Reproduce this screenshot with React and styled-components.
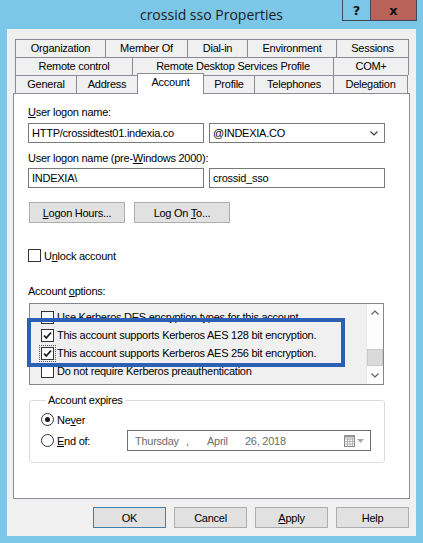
import React from 'react';
import styled, { createGlobalStyle } from 'styled-components';

const GlobalStyle = createGlobalStyle`
  html, body {
    margin: 0;
    padding: 0;
  }
  body {
    background: #7cc7e8;
    font-family: "Liberation Sans", Arial, sans-serif;
    font-size: 11px;
    letter-spacing: -0.25px;
    color: #000;
  }
  * {
    box-sizing: border-box;
  }
`;

const Window = styled.div`
  width: 423px;
  height: 543px;
  background: #7cc7e8;
  display: flex;
  flex-direction: column;
`;

const TitleBar = styled.div`
  height: 29px;
  flex: none;
  display: grid;
  grid-template-columns: 1fr auto 1fr;
`;

const Title = styled.div`
  grid-column: 2;
  align-self: center;
  font-family: "Open Sans", sans-serif;
  font-size: 14px;
  letter-spacing: 0;
  color: #1b1b1b;
  padding-bottom: 1px;
`;

const Controls = styled.div`
  grid-column: 3;
  justify-self: end;
  align-self: start;
  display: flex;
  margin-right: 6px;
`;

const CaptionButton = styled.div`
  width: ${p => p.$w}px;
  height: 21px;
  border: 1px solid #3b4a54;
  border-top: none;
  border-left: ${p => (p.$first ? '1px solid #3b4a54' : 'none')};
  background: ${p => p.$bg};
  display: flex;
  align-items: center;
  justify-content: center;
  font-family: "DejaVu Sans", sans-serif;
  font-weight: bold;
  font-size: 13px;
  letter-spacing: 0;
  color: #111;
`;

const Client = styled.div`
  flex: 1;
  margin: 0 7px 7px;
  background: #f0f0f0;
  padding: 10px 6px 0;
  display: flex;
  flex-direction: column;
`;

const TabStrip = styled.div`
  margin: 0 2px;
  display: flex;
  flex-direction: column;
`;

const TabRow = styled.div`
  display: flex;
  height: 18px;
`;

const Tab = styled.div`
  flex: none;
  width: ${p => p.$w}px;
  height: ${p => (p.$active ? 21 : 18)}px;
  margin-top: ${p => (p.$active ? -2 : 0)}px;
  margin-right: ${p => (p.$active ? -1 : 0)}px;
  border-top: 1px solid #898c95;
  border-left: 1px solid #898c95;
  border-right: ${p => (p.$active || p.$last ? '1px solid #898c95' : 'none')};
  background: ${p => (p.$active ? '#fff' : '#f0f0f0')};
  position: ${p => (p.$active ? 'relative' : 'static')};
  z-index: ${p => (p.$active ? 1 : 'auto')};
  text-align: center;
  line-height: 17px;
  white-space: nowrap;
`;

const Panel = styled.div`
  flex: none;
  height: 406px;
  border: 1px solid #898c95;
  background: #fff;
  padding: 12px 14px 0;
  display: flex;
  flex-direction: column;
`;

const Label = styled.div`
  line-height: 13px;
  margin-top: ${p => p.$mt || 0}px;
`;

const Key = styled.span`
  text-decoration: underline;
  text-underline-offset: 1px;
`;

const FieldRow = styled.div`
  display: flex;
  gap: 5px;
  margin-top: ${p => p.$mt}px;
`;

const TextBox = styled.div`
  width: 176px;
  height: 20px;
  border: 1px solid #7a7a7a;
  background: #fff;
  padding: 0 6px 0 3px;
  line-height: 18px;
  display: flex;
  align-items: center;
  justify-content: space-between;
`;

const ButtonRow = styled.div`
  display: flex;
  gap: ${p => p.$gap}px;
  margin-top: ${p => p.$mt}px;
  margin-left: ${p => p.$ml || 0}px;
  justify-content: ${p => (p.$end ? 'flex-end' : 'flex-start')};
  margin-right: ${p => (p.$end ? 1 : 0)}px;
`;

const Button = styled.div`
  width: ${p => p.$w}px;
  height: 21px;
  border: 1px solid ${p => (p.$default ? '#3c7fb1' : '#adadad')};
  background: #e1e1e1;
  display: flex;
  align-items: center;
  justify-content: center;
  white-space: pre;
`;

const CheckRow = styled.div`
  display: flex;
  align-items: center;
  gap: 3px;
  height: 13px;
  margin-top: 26px;
`;

const Box = styled.div`
  width: 13px;
  height: 13px;
  flex: none;
  border: 1px solid #333;
  background: #fff;
  display: flex;
  align-items: center;
  justify-content: center;
  outline: ${p => (p.$focus ? '1px dotted #555' : 'none')};
  outline-offset: 1px;
`;

const ListWrap = styled.div`
  position: relative;
  width: 355px;
  height: 82px;
  margin: 5px 0 0 1px;
  border: 1px solid #828790;
  background: #f0f0f0;
  display: flex;
`;

const Items = styled.div`
  flex: 1;
  min-width: 0;
  padding-top: 4px;
  overflow: hidden;
`;

const Item = styled.div`
  height: 18px;
  display: flex;
  align-items: center;
  gap: 3px;
  padding-left: 11px;
  white-space: nowrap;
`;

const ScrollBar = styled.div`
  width: 17px;
  flex: none;
  border-left: 1px solid #e6e6e6;
  background: #fdfdfd;
  display: flex;
  flex-direction: column;
`;

const ScrollArrow = styled.div`
  height: 17px;
  display: flex;
  align-items: center;
  justify-content: center;
`;

const Track = styled.div`
  flex: 1;
  display: flex;
  flex-direction: column;
  justify-content: flex-end;
`;

const Thumb = styled.div`
  height: 17px;
  margin: 0 0 1px;
  background: #dadada;
  border: 1px solid #c8c8c8;
`;

const Highlight = styled.div`
  position: absolute;
  left: -3px;
  top: 14px;
  width: 318px;
  height: 49px;
  border: 4px solid #2d5fb5;
  pointer-events: none;
`;

const Group = styled.fieldset`
  width: 356px;
  margin: 9px 0 0 1px;
  padding: 6px 10px 11px 11px;
  border: 1px solid #dcdcdc;
  border-radius: 3px;
`;

const Legend = styled.legend`
  padding: 0 2px;
  margin-left: 5px;
  line-height: 13px;
`;

const RadioRow = styled.div`
  display: flex;
  align-items: center;
  height: ${p => p.$h}px;
  margin-top: ${p => p.$mt || 0}px;
`;

const Radio = styled.div`
  width: 13px;
  height: 13px;
  flex: none;
  border-radius: 50%;
  border: 1px solid #333;
  background: #fff;
  display: flex;
  align-items: center;
  justify-content: center;
  margin-right: 3px;
  &::after {
    content: '';
    display: ${p => (p.$on ? 'block' : 'none')};
    width: 5px;
    height: 5px;
    border-radius: 50%;
    background: #1a1a1a;
  }
`;

const RadioLabel = styled.span`
  width: ${p => p.$w || 'auto'};
  flex: none;
`;

const DatePicker = styled.div`
  width: 244px;
  height: 21px;
  border: 1px solid #6f6f6f;
  display: flex;
  align-items: center;
  padding: 0 6px 0 7px;
  color: #6d6d6d;
`;

const DatePart = styled.span`
  width: ${p => p.$w}px;
  flex: none;
`;

const DateIcon = styled.div`
  margin-left: auto;
  display: flex;
  align-items: center;
  gap: 2px;
`;

const Chevron = ({ up, color = '#606060' }) => (
  <svg width="8" height="5" viewBox="0 0 8 5">
    <polyline
      points={up ? '0.5,4.5 4,1 7.5,4.5' : '0.5,0.5 4,4 7.5,0.5'}
      fill="none"
      stroke={color}
      strokeWidth="1.2"
    />
  </svg>
);

const Check = () => (
  <svg width="11" height="11" viewBox="0 0 11 11">
    <path d="M2 5.5 L4.3 8 L9 2.5" fill="none" stroke="#1a1a1a" strokeWidth="1.8" />
  </svg>
);

const Calendar = () => (
  <svg width="11" height="12" viewBox="0 0 11 12">
    <rect x="0.5" y="0.5" width="10" height="11" fill="#fff" stroke="#8a8a8a" />
    <rect x="0.5" y="0.5" width="10" height="2" fill="#9a9a9a" />
    {[3.5, 6, 8.5].map(y => (
      <line key={y} x1="1" x2="10" y1={y + 0.5} y2={y + 0.5} stroke="#b4b4b4" />
    ))}
    {[3, 5.5, 8].map(x => (
      <line key={x} x1={x + 0.5} x2={x + 0.5} y1="3" y2="11" stroke="#b4b4b4" />
    ))}
  </svg>
);

const tabRows = [
  [['Organization', 90], ['Member Of', 82], ['Dial-in', 60], ['Environment', 89], ['Sessions', 72]],
  [['Remote control', 117], ['Remote Desktop Services Profile', 201], ['COM+', 75]],
  [['General', 61], ['Address', 61], ['Account', 67], ['Profile', 51], ['Telephones', 79], ['Delegation', 74]],
];

const options = [
  { text: 'Use Kerberos DES encryption types for this account', on: false },
  { text: 'This account supports Kerberos AES 128 bit encryption.', on: true },
  { text: 'This account supports Kerberos AES 256 bit encryption.', on: true, focus: true },
  { text: 'Do not require Kerberos preauthentication', on: false },
];

export default function App() {
  return (
    <Window>
      <GlobalStyle />
      <TitleBar>
        <Title>crossid sso Properties</Title>
        <Controls>
          <CaptionButton $w={29} $bg="#7cc7e8" $first>?</CaptionButton>
          <CaptionButton $w={46} $bg="#b8625a">x</CaptionButton>
        </Controls>
      </TitleBar>

      <Client>
        <TabStrip>
          {tabRows.map((row, r) => (
            <TabRow key={r}>
              {row.map(([name, w], i) => (
                <Tab
                  key={name}
                  $w={i === row.length - 1 ? w + 1 : w}
                  $last={i === row.length - 1}
                  $active={name === 'Account'}
                >
                  {name}
                </Tab>
              ))}
            </TabRow>
          ))}
        </TabStrip>

        <Panel>
          <Label><Key>U</Key>ser logon name:</Label>
          <FieldRow $mt={4}>
            <TextBox>HTTP/crossidtest01.indexia.co</TextBox>
            <TextBox>
              @INDEXIA.CO
              <Chevron color="#3a3a3a" />
            </TextBox>
          </FieldRow>

          <Label $mt={9}>User logon name (pre-<Key>W</Key>indows 2000):</Label>
          <FieldRow $mt={3}>
            <TextBox>INDEXIA\</TextBox>
            <TextBox>crossid_sso</TextBox>
          </FieldRow>

          <ButtonRow $gap={9} $mt={14} $ml={1}>
            <Button $w={96}><span><Key>L</Key>ogon Hours...</span></Button>
            <Button $w={96}><span>Log On <Key>T</Key>o...</span></Button>
          </ButtonRow>

          <CheckRow>
            <Box />
            <span>U<Key>n</Key>lock account</span>
          </CheckRow>

          <Label $mt={23}>Account <Key>o</Key>ptions:</Label>
          <ListWrap>
            <Items>
              {options.map(o => (
                <Item key={o.text}>
                  <Box $focus={o.focus}>{o.on && <Check />}</Box>
                  {o.text}
                </Item>
              ))}
            </Items>
            <ScrollBar>
              <ScrollArrow><Chevron up /></ScrollArrow>
              <Track><Thumb /></Track>
              <ScrollArrow><Chevron /></ScrollArrow>
            </ScrollBar>
            <Highlight />
          </ListWrap>

          <Group>
            <Legend>Account expires</Legend>
            <RadioRow $h={13}>
              <Radio $on />
              <span>Ne<Key>v</Key>er</span>
            </RadioRow>
            <RadioRow $h={21} $mt={4}>
              <Radio />
              <RadioLabel $w="70px"><Key>E</Key>nd of:</RadioLabel>
              <DatePicker>
                <DatePart $w={51}>Thursday</DatePart>
                <DatePart $w={21}>,</DatePart>
                <DatePart $w={38}>April</DatePart>
                <DatePart $w={60}>26, 2018</DatePart>
                <DateIcon>
                  <Calendar />
                  <svg width="7" height="4" viewBox="0 0 7 4">
                    <polygon points="0,0 7,0 3.5,4" fill="#a8a8a8" />
                  </svg>
                </DateIcon>
              </DatePicker>
            </RadioRow>
          </Group>
        </Panel>

        <ButtonRow $gap={8} $mt={8} $end>
          <Button $w={73} $default>OK</Button>
          <Button $w={73}>Cancel</Button>
          <Button $w={73}><span><Key>A</Key>pply</span></Button>
          <Button $w={73}>Help</Button>
        </ButtonRow>
      </Client>
    </Window>
  );
}
